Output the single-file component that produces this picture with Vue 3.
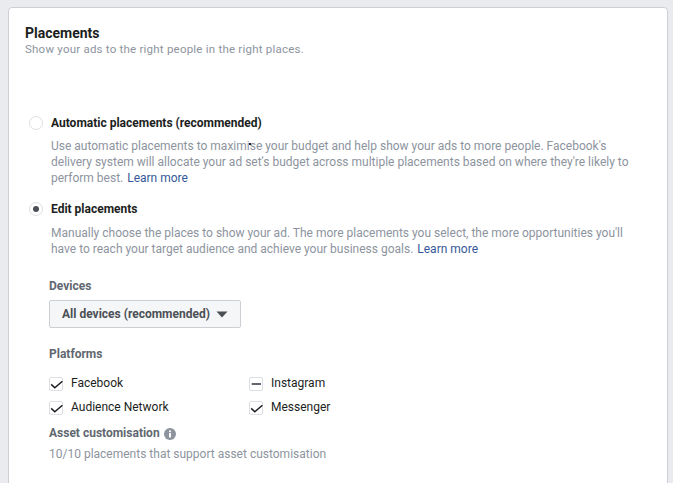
<script setup>
const platforms = [
  { name: 'Facebook', state: 'check' },
  { name: 'Instagram', state: 'dash' },
  { name: 'Audience Network', state: 'check' },
  { name: 'Messenger', state: 'check' },
]
</script>

<template>
  <div class="page">
    <section class="card">
      <h2 class="title">Placements</h2>
      <p class="sub">Show your ads to the right people in the right places.</p>

      <div class="option first">
        <span class="radio"></span>
        <span class="opt-label">Automatic placements (recommended)</span>
      </div>
      <p class="desc">Use automatic placements to maximi<span class="caret-wrap"><span class="caret"></span></span>se your budget and help show your ads to more people. Facebook's<br>delivery system will allocate your ad set's budget across multiple placements based on where they're likely to<br>perform best. <a class="link">Learn more</a></p>

      <div class="option second">
        <span class="radio"><span class="dot"></span></span>
        <span class="opt-label">Edit placements</span>
      </div>
      <p class="desc desc-edit">Manually choose the places to show your ad. The more placements you select, the more opportunities you'll<br>have to reach your target audience and achieve your business goals. <a class="link">Learn more</a></p>

      <div class="details">
        <div class="label devices">Devices</div>
        <button class="select">
          <span>All devices (recommended)</span>
          <svg width="12" height="7" viewBox="0 0 12 7"><path d="M0.5 0.5h11L6 6.5z" fill="#4b4f56"/></svg>
        </button>

        <div class="label platforms">Platforms</div>
        <div class="grid">
          <div v-for="p in platforms" :key="p.name" class="plat">
            <span class="box">
              <svg v-if="p.state === 'check'" width="14" height="14" viewBox="0 0 14 14"><path d="M2.2 7.4l3.6 3.4 7.6-6.6" fill="none" stroke="#1c1e21" stroke-width="1.5"/></svg>
              <svg v-else width="14" height="14" viewBox="0 0 14 14"><path d="M2.7 7h9.3" fill="none" stroke="#606770" stroke-width="2"/></svg>
            </span>
            <span class="plat-name">{{ p.name }}</span>
          </div>
        </div>

        <div class="label asset">
          Asset customisation
          <svg class="info" width="12" height="12" viewBox="0 0 12 12">
            <circle cx="6" cy="6" r="6" fill="#8d949e"/>
            <rect x="5" y="5" width="2" height="4.5" fill="#fff"/>
            <rect x="5" y="2.5" width="2" height="1.6" fill="#fff"/>
          </svg>
        </div>
        <p class="note">10/10 placements that support asset customisation</p>
      </div>
    </section>
  </div>
</template>

<style>
html, body { margin: 0; background: #e9ebee; }
</style>

<style scoped>
.page {
  height: 483px;
  overflow: hidden;
  padding: 7px 5px 0 8px;
  box-sizing: border-box;
  font-family: Roboto, sans-serif;
  font-size: 12px;
  background: #e9ebee;
}
.card {
  height: 520px;
  box-sizing: border-box;
  background: #fff;
  border: 1px solid #ccd0d5;
  border-radius: 4px;
  padding: 16px 16px 0;
}
.title {
  margin: 0;
  font-size: 14px;
  line-height: 18px;
  font-weight: 700;
  color: #1c1e21;
}
.sub {
  margin: 0;
  line-height: 14px;
  color: #8d949e;
  font-size: 11.5px;
  letter-spacing: 0.22px;
}
.option {
  display: flex;
  align-items: center;
  padding-left: 4px;
  height: 16px;
}
.first { margin-top: 59px; }
.second { margin-top: 15px; }
.radio {
  width: 12px;
  height: 12px;
  border: 1px solid #dddfe2;
  border-radius: 50%;
  box-sizing: content-box;
  display: flex;
  align-items: center;
  justify-content: center;
  margin-right: 8px;
}
.dot {
  width: 6px;
  height: 6px;
  border-radius: 50%;
  background: #4b4f56;
}
.opt-label {
  font-weight: 700;
  color: #1c1e21;
  line-height: 16px;
}
.desc {
  margin: 7px 0 0 26px;
  line-height: 16px;
  color: #8d949e;
  white-space: nowrap;
}
.desc-edit { margin-top: 8px; }
.caret-wrap { position: relative; }
.caret {
  position: absolute;
  left: -1px;
  top: 4px;
  width: 2px;
  height: 2px;
  background: #1c1e21;
}
.link { color: #365899; margin-left: 1px; }
.details { padding-left: 24px; }
.label {
  font-weight: 700;
  color: #606770;
  line-height: 16px;
}
.devices { margin-top: 21px; }
.select {
  display: flex;
  align-items: center;
  gap: 6px;
  margin-top: 6px;
  width: 192px;
  height: 28px;
  padding: 0 12px;
  box-sizing: border-box;
  background: #f5f6f7;
  border: 1px solid #ccd0d5;
  border-radius: 2px;
  font: 700 12px Roboto, sans-serif;
  color: #4b4f56;
}
.platforms { margin-top: 18px; }
.grid {
  display: grid;
  grid-template-columns: 200px 200px;
  row-gap: 10px;
  margin-top: 15px;
}
.plat {
  display: flex;
  align-items: flex-start;
  height: 14px;
}
.box {
  width: 12px;
  height: 12px;
  border: 1px solid #dddfe2;
  border-radius: 2px;
  margin-right: 8px;
  box-sizing: content-box;
  flex: none;
}
.box svg { display: block; margin: -1px; }
.plat-name {
  color: #1c1e21;
  line-height: 14px;
  margin-top: -1px;
}
.asset {
  display: flex;
  align-items: center;
  gap: 5px;
  margin-top: 10px;
}
.info { margin-top: 1px; margin-left: -1px; }
.note {
  margin: 5px 0 0;
  line-height: 16px;
  color: #8d949e;
}
</style>
